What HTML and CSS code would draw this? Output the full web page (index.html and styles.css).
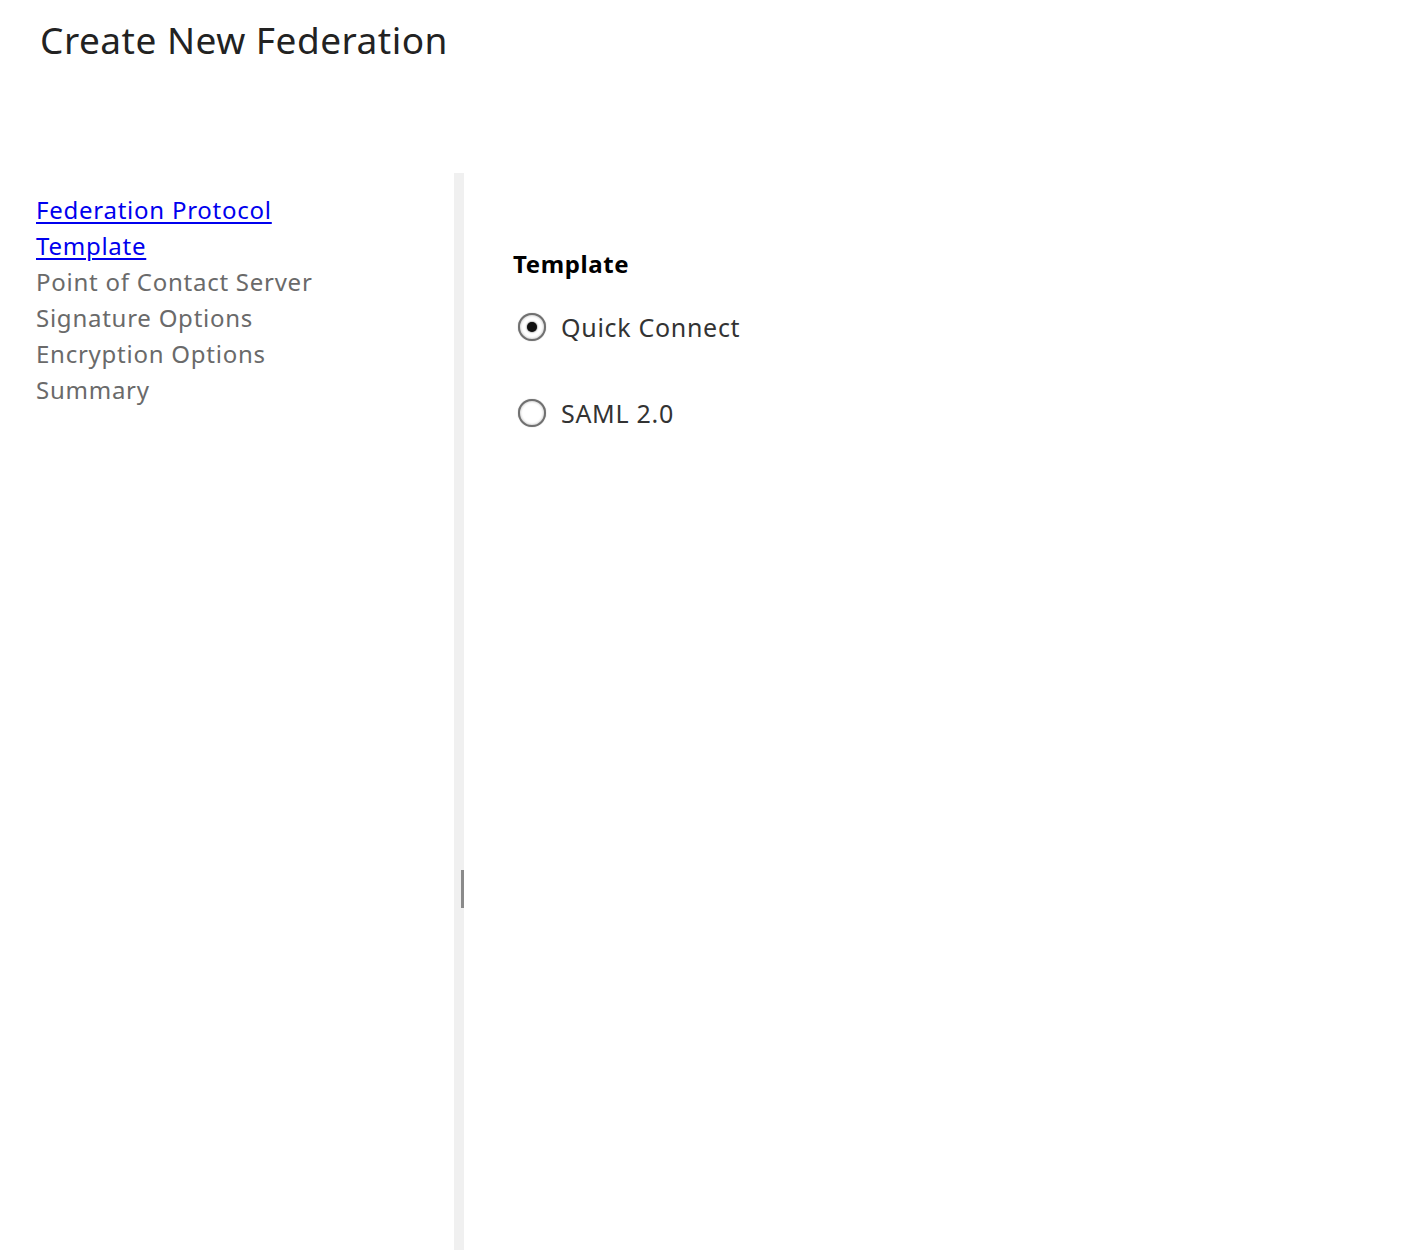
FILE: index.html
```html
<!DOCTYPE html>
<html lang="en">
<head>
<meta charset="utf-8">
<title>Create New Federation</title>
<link rel="stylesheet" href="styles.css">
</head>
<body>
<header class="page-header">
  <h1 class="page-title">Create New Federation</h1>
</header>
<div class="wizard">
  <nav class="steps">
    <a class="step step-link" href="#">Federation Protocol</a>
    <a class="step step-link" href="#">Template</a>
    <span class="step">Point of Contact Server</span>
    <span class="step">Signature Options</span>
    <span class="step">Encryption Options</span>
    <span class="step">Summary</span>
  </nav>
  <div class="splitter"><span class="splitter-handle"></span></div>
  <main class="content">
    <h2 class="field-label">Template</h2>
    <label class="option"><span class="radio checked"></span><span class="option-text">Quick Connect</span></label>
    <label class="option"><span class="radio"></span><span class="option-text">SAML 2.0</span></label>
  </main>
</div>
</body>
</html>
```

FILE: styles.css
```css
html, body {
  margin: 0;
  padding: 0;
  background: #ffffff;
  height: 100%;
}
body {
  font-family: "Noto Sans", "Open Sans", sans-serif;
  color: #333333;
  overflow: hidden;
}
.page-header {
  height: 173px;
  box-sizing: border-box;
  padding: 14px 0 0 40px;
}
.page-title {
  margin: 0;
  font-weight: 400;
  font-size: 37px;
  line-height: 52px;
  color: #222222;
  letter-spacing: 0.5px;
}
.wizard {
  display: flex;
  height: 1077px;
}
.steps {
  width: 418px;
  padding: 19px 0 0 36px;
  display: flex;
  flex-direction: column;
  align-items: flex-start;
}
.step {
  font-size: 24px;
  line-height: 36px;
  color: #6a6a6a;
  letter-spacing: 0.75px;
}
.step-link {
  color: #0000ee;
  text-decoration: underline;
  text-underline-offset: 3px;
}
.splitter {
  width: 10px;
  background: #f0f0f0;
  display: flex;
  align-items: flex-start;
  justify-content: flex-end;
}
.splitter-handle {
  display: block;
  width: 3px;
  height: 38px;
  margin-top: 697px;
  background: #8a8a8a;
}
.content {
  flex: 1;
  padding: 73px 0 0 49px;
}
.field-label {
  margin: 0 0 27px 0;
  font-size: 24px;
  line-height: 36px;
  font-weight: 700;
  color: #000000;
  letter-spacing: 0.6px;
}
.option {
  display: flex;
  align-items: center;
  height: 36px;
  margin-bottom: 50px;
}
.radio {
  width: 24px;
  height: 24px;
  border-radius: 50%;
  border: 2px solid #707070;
  box-shadow: inset 0 0 2px 1px #d8d8d8, 0 0 1px 0 #999;
  margin: 0 15px 0 5px;
  display: flex;
  align-items: center;
  justify-content: center;
  background: #ffffff;
}
.radio.checked::after {
  content: "";
  width: 10px;
  height: 10px;
  border-radius: 50%;
  background: #111111;
  box-shadow: 0 0 2px #333;
}
.option-text {
  font-size: 25px;
  line-height: 36px;
  color: #333333;
  letter-spacing: 0.7px;
}
```
